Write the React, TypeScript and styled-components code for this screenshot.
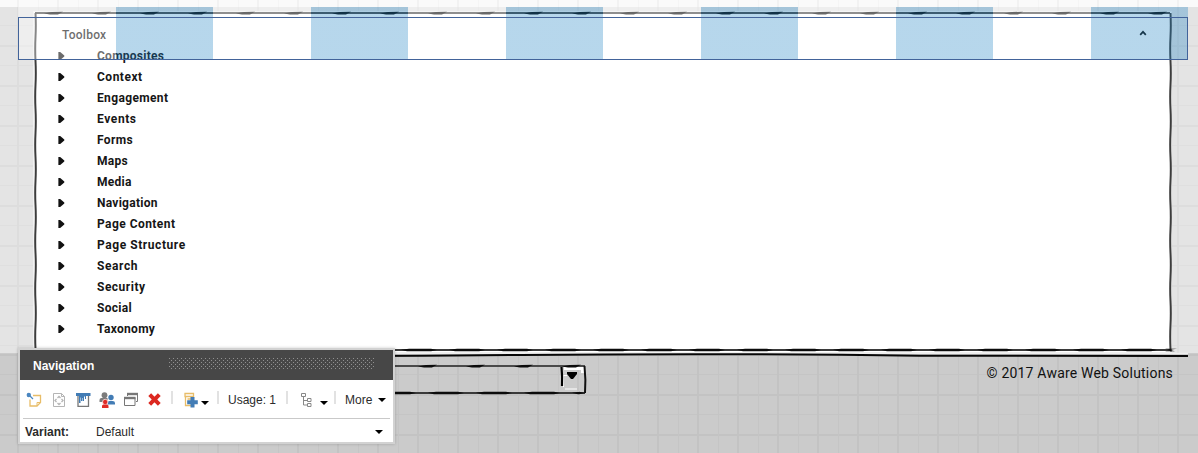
import React from 'react';
import styled, { createGlobalStyle, css } from 'styled-components';

const GlobalStyle = createGlobalStyle`
  * { box-sizing: border-box; }
  body { margin: 0; background: #e4e4e4; overflow: hidden; }
`;

const grid = (strong: string, weak: string, y: number) => css`
  background-image:
    linear-gradient(90deg, ${strong} 2px, transparent 2px),
    linear-gradient(90deg, ${weak} 1px, transparent 1px),
    linear-gradient(${strong} 2px, transparent 2px),
    linear-gradient(${weak} 1px, transparent 1px);
  background-size: 40px 40px;
  background-position: 17px 0, 38px 0, 0 ${y}px, 0 ${y + 20}px;
`;

const Page = styled.div`
  position: relative;
  width: 1198px;
  height: 453px;
  display: flex;
  flex-direction: column;
  overflow: hidden;
  font-family: 'Liberation Sans', Arial, sans-serif;
`;

const TopStrip = styled.div`
  height: 7px;
  background-color: #fafafa;
  ${grid('#f2f2f2', '#f5f5f5', 30)}
`;

const Main = styled.main`
  height: 346px;
  padding: 5px 27px 0 34px;
  background-color: #e4e4e4;
  ${grid('#dddddd', '#dfdfdf', 38)}
`;

const SketchPanel = styled.section`
  position: relative;
  height: 340px;
  padding: 12px 24px 0 23px;
  background: #fff;
  box-shadow: 0 0 0 1px #f1f1f1;
  font-family: Roboto, 'Open Sans', sans-serif;
`;

const Frame = styled.svg`
  position: absolute;
  inset: 0;
  overflow: visible;
  pointer-events: none;
`;

const PanelHeader = styled.header`
  display: flex;
  justify-content: space-between;
  align-items: center;
  height: 21px;
  padding: 0 0 0 5px;
  font-size: 12px;
  font-weight: 500;
  letter-spacing: 0.25px;
  color: #111;

  svg {
    margin-bottom: 4px;
  }
`;

const List = styled.ul`
  margin: 0;
  padding: 0;
  list-style: none;
`;

const Item = styled.li<{ $spacing: number }>`
  display: flex;
  align-items: center;
  gap: 32px;
  height: 21px;
  font-size: 12px;
  font-weight: 700;
  letter-spacing: ${(p) => p.$spacing}px;
  color: #161616;
`;

const Footer = styled.footer`
  display: flex;
  justify-content: space-between;
  height: 100px;
  padding: 12px 25px 0 280px;
  background-color: #cbcbcb;
  ${grid('#c3c3c3', '#c5c5c5', 41)}
`;

const FooterRule = styled.svg`
  position: absolute;
  left: 20px;
  top: 351px;
`;

const SelectBox = styled.div`
  position: relative;
  display: flex;
  justify-content: flex-end;
  width: 306px;
  height: 29px;
`;

const Copyright = styled.p`
  margin: 0;
  font: 400 14px/17px Roboto, 'Open Sans', sans-serif;
  letter-spacing: 0.2px;
  color: #111;
`;

const DropZone = styled.div`
  position: absolute;
  left: 18px;
  top: 7px;
  width: 1170px;
  height: 53px;
  background:
    repeating-linear-gradient(90deg, rgba(255, 255, 255, 0.38) 0 98px, rgba(30, 130, 195, 0.32) 98px 195px);
`;

const DropOutline = styled.div`
  margin-top: 10px;
  height: 43px;
  border: 1px solid #42639a;
`;

const Dialog = styled.div`
  position: absolute;
  left: 18px;
  top: 348px;
  width: 377px;
  height: 96px;
  display: flex;
  flex-direction: column;
  border: 2px solid #d2d2d2;
  background: #fff;
  box-shadow: 0 0 3px rgba(0, 0, 0, 0.2);
  color: #2b2b2b;
  font-size: 12px;
`;

const TitleBar = styled.div`
  display: flex;
  align-items: center;
  justify-content: space-between;
  height: 30px;
  padding: 2px 18px 0 13px;
  background: #474747;
  color: #fff;
  font-weight: 700;
`;

const Grip = styled.div`
  width: 206px;
  height: 11px;
  margin-bottom: 6px;
  background-image:
    radial-gradient(circle at 0.5px 0.5px, #909090 0.7px, transparent 0.8px),
    radial-gradient(circle at 0.5px 0.5px, #909090 0.7px, transparent 0.8px);
  background-size: 4px 4px;
  background-position: 0 0, 2px 2px;
`;

const Toolbar = styled.div`
  display: flex;
  align-items: center;
  height: 39px;
  margin: 0 3px;
  padding: 1px 0 0 3px;
  border-bottom: 1px solid #c9c9c9;
`;

const Slot = styled.span<{ $w: number; $text?: boolean }>`
  display: flex;
  align-items: center;
  flex: none;
  width: ${(p) => p.$w}px;
  padding-top: ${(p) => (p.$text ? 1 : 0)}px;
  white-space: nowrap;
`;

const Separator = styled.i<{ $after: number }>`
  flex: none;
  width: 2px;
  height: 13px;
  margin: 0 ${(p) => p.$after}px 4px -1px;
  background: #e2e2e2;
`;

const Caret = styled.i<{ $drop?: boolean }>`
  flex: none;
  width: 0;
  height: 0;
  margin-top: ${(p) => (p.$drop ? 7 : 1)}px;
  border: 4px solid transparent;
  border-top-color: #000;
  border-bottom: 0;
`;

const VariantRow = styled.div`
  display: flex;
  align-items: center;
  flex: 1;
  padding: 1px 10px 0 5px;
`;

const VariantLabel = styled.b`
  width: 71px;
  padding-top: 1px;
`;

const VariantValue = styled.span`
  flex: 1;
  padding-top: 1px;
`;

/* A hand-drawn horizontal stroke: a thin line with a tapered dab every 48px. */
function RoughH({ x1, x2, y, heavy, first = 0 }: { x1: number; x2: number; y: number; heavy?: boolean; first?: number }) {
  let dabs = '';
  const len = heavy ? 36 : 11;
  for (let x = x1 + first; x < x2; x += 48) {
    const end = Math.min(x + len, x2);
    dabs += heavy
      ? `M${x} ${y - 0.2}L${x + 8} ${y - 1.2}H${end - 6}L${end} ${y}L${end - 6} ${y + 1.2}H${x + 6}z`
      : `M${x - 8} ${y + 0.6}L${x} ${y - 1}L${end} ${y - 1.3}L${end - 5} ${y + 1.6}H${x - 2}z`;
  }
  return (
    <g>
      <path d={`M${x1} ${y}H${x2}`} fill="none" strokeWidth={heavy ? 1.8 : 2} stroke={heavy ? '#3a3a3a' : '#4a4a4a'} />
      <path d={dabs} fill="#0b0b0b" />
    </g>
  );
}

/* A hand-drawn vertical stroke with a slight wobble. */
function RoughV({ x, y1, y2 }: { x: number; y1: number; y2: number }) {
  let d = `M${x} ${y1}`;
  let side = 1;
  for (let y = y1; y < y2; y += 24) {
    d += ` Q${x + side * 0.6} ${Math.min(y + 12, y2)} ${x} ${Math.min(y + 24, y2)}`;
    side = -side;
  }
  return <path d={d} fill="none" stroke="#3c3c3c" strokeWidth="2" />;
}

const NoteIcon = () => (
  <svg width="17" height="16" viewBox="0 0 17 16" fill="none">
    <path d="M7 3.500h7.500v7l-3.500 3.500H4V7.500" stroke="#e8bd68" strokeWidth="1.300" />
    <path d="M14.500 10.500H11V14" stroke="#e8bd68" />
    <circle cx="2.800" cy="3" r="2.200" fill="#4a86c0" />
    <path d="M4 4l3 3" stroke="#4a86c0" strokeWidth="1.300" />
  </svg>
);

const FileIcon = () => (
  <svg width="14" height="16" viewBox="0 0 14 16" fill="none" stroke="#b5b5b5">
    <path d="M1.500 1.500h8l3 3v10h-11zM9.500 1.500v3h3" />
    <path d="M5.500 6L7 4.500 8.500 6M5.500 11L7 12.500 8.500 11M4.500 7L3 8.500 4.500 10M9.500 7L11 8.500 9.500 10" strokeWidth="1.300" />
  </svg>
);

const PaintIcon = () => (
  <svg width="15" height="14" viewBox="0 0 15 14">
    <path d="M2 3v10.300h10.500V3" fill="none" stroke="#777" strokeWidth="1.300" />
    <path d="M0 0h14.500v3H10V6H9V3.500H8V8H6.500V5H6v3H5V4.500H4.500V10H3V3H0z" fill="#427cb5" />
  </svg>
);

const PeopleIcon = () => (
  <svg width="17" height="16" viewBox="0 0 17 16">
    <circle cx="5.500" cy="3.200" r="2.900" fill="#7c7c7c" />
    <path d="M.5 10V8q0-2 2-2h6v4z" fill="#7c7c7c" />
    <circle cx="12" cy="5.500" r="2.700" fill="#427cb5" />
    <path d="M8.500 12.500V11q0-2 2-2h3q2.500 0 2.500 2v1.500z" fill="#427cb5" />
    <circle cx="6.200" cy="10" r="2.700" fill="#df2c27" stroke="#fff" strokeWidth=".7" />
    <path d="M3 16v-2q0-1.500 1.500-1.500H8q1.500 0 1.500 1.500v2z" fill="#df2c27" />
  </svg>
);

const WindowsIcon = () => (
  <svg width="15" height="15" viewBox="0 0 15 15" fill="none" stroke="#777">
    <path d="M3.500 4V1.500h10v8H12" />
    <path d="M3 2h11" strokeWidth="2.400" />
    <path d="M.5 5.500h10.500v8H.5z" />
    <path d="M0 6h11.500" strokeWidth="2.400" />
  </svg>
);

const DeleteIcon = () => (
  <svg width="13" height="13" viewBox="0 0 13 13">
    <path d="M1.700 1.700l9.600 9.600M11.300 1.700L1.700 11.300" stroke="#dc2820" strokeWidth="4" />
  </svg>
);

const AddIcon = () => (
  <svg width="15" height="16" viewBox="0 0 15 16" fill="none">
    <path d="M1 1.500h8.500v3H1zM1.500 5v8.500h8M3.500 7h5M3.500 10h3" stroke="#e8bd68" strokeWidth="1.300" />
    <path d="M8.500 5v10.500M3.200 10.200h10.600" stroke="#427cb5" strokeWidth="4" />
  </svg>
);

const TreeIcon = () => (
  <svg width="11" height="14" viewBox="0 0 11 14" fill="none" stroke="#888">
    <path d="M.5.5h4v3h-4zM2.500 3.500v8.500h4M2.500 7.500h4M6.500 5.500h3.500v3h-3.500zM6.500 10.500h3.500v3h-3.500z" />
  </svg>
);

const categories: [string, number][] = [
  ['Composites', 0.26],
  ['Context', 0.5],
  ['Engagement', 0.36],
  ['Events', 0.6],
  ['Forms', 0.35],
  ['Maps', 0.25],
  ['Media', 0.25],
  ['Navigation', 0.26],
  ['Page Content', 0.45],
  ['Page Structure', 0.57],
  ['Search', 0.6],
  ['Security', 0.5],
  ['Social', 0.3],
  ['Taxonomy', 0.33],
];

export default function App() {
  return (
    <Page>
      <GlobalStyle />
      <TopStrip />
      <Main>
        <SketchPanel>
          <Frame width="1137" height="340">
            <RoughH x1={1} x2={1136} y={1} first={17} />
            <RoughV x={1.5} y1={1} y2={338} />
            <RoughV x={1136.5} y1={1} y2={339} />
            <RoughH x1={1} x2={1137} y={338} heavy first={30} />
          </Frame>
          <PanelHeader>
            <span>Toolbox</span>
            <svg width="8" height="6" viewBox="0 0 8 6">
              <path d="M1.200 4.800L4 1.800l2.800 3" fill="none" stroke="#111" strokeWidth="1.700" />
            </svg>
          </PanelHeader>
          <List>
            {categories.map(([name, spacing]) => (
              <Item key={name} $spacing={spacing}>
                <svg width="8" height="8" viewBox="0 0 8 8">
                  <path d="M1.400 0h1.800L7.300 3.600v.8L3.200 8H1.400z" fill="#111" />
                </svg>
                {name}
              </Item>
            ))}
          </List>
        </SketchPanel>
      </Main>
      <Footer>
        <SelectBox>
          <Frame width="306" height="29">
            <path d="M284 2h20v6h-3V5H284zM283 10h4v1h-3v11h-1zM285 23.500h12v1h-12z" fill="#fff" />
            <RoughH x1={0} x2={305} y={1} first={2} />
            <RoughH x1={0} x2={305} y={28} heavy first={4} />
            <path d="M281.500 2q1 10 .5 19" stroke="#000" strokeWidth="2.200" fill="none" />
            <path d="M304.500 1q1.500 14 .5 27" stroke="#111" strokeWidth="2" fill="none" />
            <path d="M287 7h10v2l-4 5h-2l-4-5z" fill="#000" />
          </Frame>
        </SelectBox>
        <Copyright>© 2017 Aware Web Solutions</Copyright>
      </Footer>
      <FooterRule width="1168" height="8">
        <path d="M0 2.500h1168" stroke="#eee" strokeWidth="1.500" />
        <path d="M0 4.500Q300 6 500 4T900 4.700L1168 5" fill="none" stroke="#080808" strokeWidth="2" />
      </FooterRule>
      <DropZone>
        <DropOutline />
      </DropZone>
      <Dialog>
        <TitleBar>
          <span>Navigation</span>
          <Grip />
        </TitleBar>
        <Toolbar>
          <Slot $w={26}><NoteIcon /></Slot>
          <Slot $w={24}><FileIcon /></Slot>
          <Slot $w={23}><PaintIcon /></Slot>
          <Slot $w={25}><PeopleIcon /></Slot>
          <Slot $w={24}><WindowsIcon /></Slot>
          <Slot $w={24}><DeleteIcon /></Slot>
          <Separator $after={11} />
          <Slot $w={17}><AddIcon /></Slot>
          <Slot $w={17}><Caret $drop /></Slot>
          <Separator $after={9} />
          <Slot $w={59} $text>Usage: 1</Slot>
          <Separator $after={13} />
          <Slot $w={19}><TreeIcon /></Slot>
          <Slot $w={15}><Caret $drop /></Slot>
          <Separator $after={9} />
          <Slot $w={33} $text>More</Slot>
          <Caret />
        </Toolbar>
        <VariantRow>
          <VariantLabel>Variant:</VariantLabel>
          <VariantValue>Default</VariantValue>
          <Caret />
        </VariantRow>
      </Dialog>
    </Page>
  );
}
